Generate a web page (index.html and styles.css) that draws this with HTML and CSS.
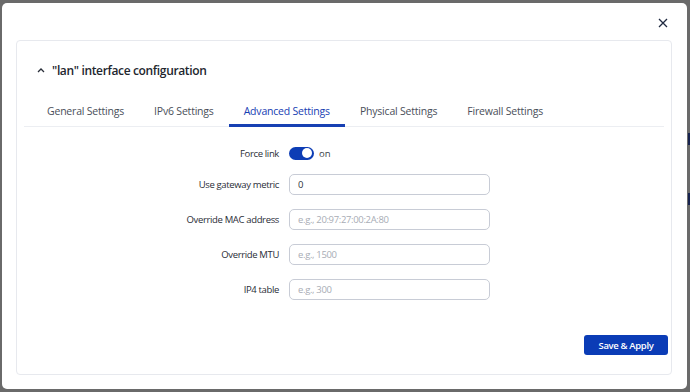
FILE: index.html
```html
<!DOCTYPE html>
<html lang="en">
  <head>
    <meta charset="UTF-8" />
    <meta name="viewport" content="width=device-width, initial-scale=1.0" />
    <title>Interface configuration</title>
    <link rel="stylesheet" href="styles.css">
  </head>
  <body>
    <div class="modal">
      <div class="modal-header">
        <button class="close-btn" aria-label="Close">
          <svg width="10" height="10" viewBox="0 0 10 10">
            <path d="M1 1 L9 9 M9 1 L1 9" stroke="#1f2940" stroke-width="1.3" fill="none" />
          </svg>
        </button>
      </div>

      <div class="card">
        <div class="card-title">
          <svg class="chevron" width="8" height="6" viewBox="0 0 8 6">
            <path d="M1 5 L4 2 L7 5" stroke="#2a2f3a" stroke-width="1.3" fill="none" />
          </svg>
          <h2>"lan" interface configuration</h2>
        </div>

        <ul class="tabs">
          <li class="tab">General Settings</li>
          <li class="tab">IPv6 Settings</li>
          <li class="tab active">Advanced Settings</li>
          <li class="tab">Physical Settings</li>
          <li class="tab">Firewall Settings</li>
        </ul>

        <div class="form">
          <label class="form-label">Force link</label>
          <div class="toggle-wrap">
            <span class="toggle"><span class="knob"></span></span>
            <span class="toggle-text">on</span>
          </div>

          <label class="form-label">Use gateway metric</label>
          <input class="form-input" type="text" value="0" />

          <label class="form-label">Override MAC address</label>
          <input class="form-input" type="text" placeholder="e.g., 20:97:27:00:2A:80" />

          <label class="form-label">Override MTU</label>
          <input class="form-input" type="text" placeholder="e.g., 1500" />

          <label class="form-label">IP4 table</label>
          <input class="form-input" type="text" placeholder="e.g., 300" />
        </div>

        <div class="actions">
          <button class="btn-primary">Save &amp; Apply</button>
        </div>
      </div>
    </div>

    <div class="backdrop-edge">
      <span class="edge-bar first"></span>
      <span class="edge-bar second"></span>
    </div>
  </body>
</html>
```

FILE: styles.css
```css
* {
  box-sizing: border-box;
  margin: 0;
  padding: 0;
}

body {
  font-family: "Open Sans", "Noto Sans", sans-serif;
  background-color: #6a6a6a;
  display: flex;
  flex-direction: row;
  width: 690px;
  height: 392px;
  overflow: hidden;
  color: #2b2f38;
}

.modal {
  width: 685px;
  height: 386px;
  margin: 3px 0 0 2px;
  background-color: #fff;
  border-radius: 5px;
  padding: 0 15px 0 14px;
  flex-shrink: 0;
}

.modal-header {
  height: 37px;
  display: flex;
  justify-content: flex-end;
  align-items: center;
  padding-right: 2px;
}

.close-btn {
  background: none;
  border: none;
  width: 14px;
  height: 14px;
  display: flex;
  align-items: center;
  justify-content: center;
  margin-top: 2px;
}

.card {
  border: 1px solid #e7e9ee;
  border-radius: 4px;
  height: 335px;
  padding: 19px 7px 0 7px;
}

.card-title {
  display: flex;
  align-items: center;
  height: 20px;
  padding-left: 13px;
}

.chevron {
  margin-right: 7px;
}

.card-title h2 {
  font-size: 12px;
  letter-spacing: -0.35px;
  font-weight: 600;
  color: #22262e;
}

.tabs {
  list-style: none;
  display: flex;
  margin-top: 16px;
  padding-left: 8px;
  border-bottom: 1px solid #eceef2;
  height: 31px;
}

.tab {
  padding: 0 15px;
  font-size: 10.5px;
  letter-spacing: -0.2px;
  color: #4a4f5a;
  display: flex;
  align-items: center;
  padding-top: 2px;
  border-bottom: 3px solid transparent;
  margin-bottom: -1px;
}

.tab.active {
  color: #1740b3;
  border-bottom-color: #1740b3;
}

.form {
  display: grid;
  grid-template-columns: 255px 201px;
  column-gap: 10px;
  row-gap: 14px;
  margin-top: 19px;
  align-items: center;
}

.form-label {
  text-align: right;
  font-size: 9.5px;
  letter-spacing: -0.35px;
  color: #2a2e37;
}

.toggle-wrap {
  display: flex;
  align-items: center;
  height: 14px;
}

.toggle {
  width: 25px;
  height: 13px;
  border-radius: 7px;
  background-color: #0d3db5;
  position: relative;
}

.knob {
  position: absolute;
  top: 1.5px;
  right: 2px;
  width: 10px;
  height: 10px;
  border-radius: 50%;
  background-color: #fff;
}

.toggle-text {
  margin-left: 5px;
  font-size: 9.5px;
  color: #3a3e47;
}

.form-input {
  height: 21px;
  border: 1px solid #c8ccd6;
  border-radius: 5px;
  padding: 0 8px;
  font-family: inherit;
  font-size: 9.5px;
  letter-spacing: -0.35px;
  color: #2f333c;
  outline: none;
}

.form-input::placeholder {
  color: #a8acb5;
}

.actions {
  display: flex;
  justify-content: flex-end;
  margin-top: 35px;
}

.btn-primary {
  width: 84px;
  height: 20px;
  background-color: #0b3cb6;
  color: #fff;
  border: none;
  border-radius: 3px;
  font-family: inherit;
  font-size: 9.5px;
  letter-spacing: -0.35px;
  font-weight: 600;
  margin-right: -4px;
}

.backdrop-edge {
  flex: 1;
  position: relative;
}

.edge-bar {
  position: absolute;
  left: 1px;
  right: 0;
  height: 12px;
  background-color: #17234f;
}

.edge-bar.first {
  top: 133px;
}

.edge-bar.second {
  top: 193px;
}
```
